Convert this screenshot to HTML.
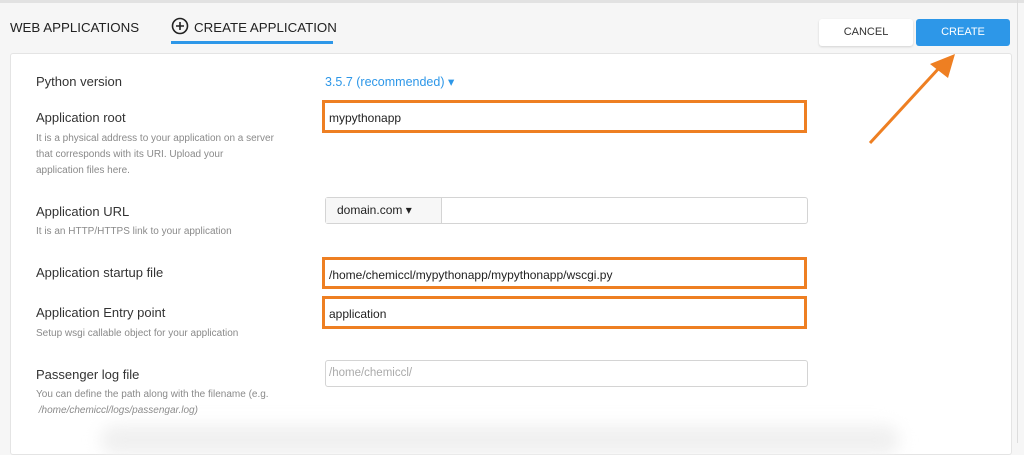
<!DOCTYPE html>
<html><head><style>
body{margin:0;width:1024px;height:443px;background:#f6f6f6;font-family:"Liberation Sans",sans-serif;position:relative;overflow:hidden}
.a{position:absolute;white-space:nowrap}
.lbl{font-size:13px;color:#333}
.desc{font-size:10px;color:#8a8a8a;line-height:16px}
.ob{position:absolute;left:322px;width:479px;border:3px solid #ee7f22;background:#fff;font-size:12px;color:#222;box-sizing:content-box}
.ob span{position:absolute;left:4px;top:8px}
.in{position:absolute;border:1px solid #d4d4d4;border-radius:3px;background:#fff}
</style></head><body>
<div class="a" style="left:0;top:0;width:1024px;height:3px;background:#e2e2e2"></div>
<div class="a" style="left:1017px;top:0;width:1px;height:443px;background:#ddd"></div>
<div class="a" style="left:10px;top:20px;font-size:13.3px;color:#222">WEB APPLICATIONS</div>
<div class="a" style="left:171px;top:17px;width:18px;height:18px"><svg width="18" height="18"><circle cx="9" cy="9" r="7.5" fill="none" stroke="#222" stroke-width="1.6"/><path d="M9 5v8M5 9h8" stroke="#222" stroke-width="1.6"/></svg></div>
<div class="a" style="left:194px;top:20px;font-size:13.3px;color:#222">CREATE APPLICATION</div>
<div class="a" style="left:171px;top:41px;width:162px;height:3px;background:#2d97e8"></div>
<div class="a" style="left:819px;top:19px;width:94px;height:27px;background:#fff;border-radius:3px;box-shadow:0 1px 2px rgba(0,0,0,.15);font-size:11px;color:#333;text-align:center;line-height:27px">CANCEL</div>
<div class="a" style="left:916px;top:19px;width:94px;height:27px;background:#2d97e8;border-radius:3px;font-size:11px;color:#fff;text-align:center;line-height:27px">CREATE</div>
<div class="a" style="left:10px;top:53px;width:1000px;height:400px;background:#fff;border:1px solid #e4e4e4;border-radius:3px"></div>
<svg class="a" style="left:0;top:0" width="1024" height="443"><path d="M870 143L940 67" stroke="#ee7f22" stroke-width="3"/><path d="M955 54L930 64L948 78Z" fill="#ee7f22"/></svg>

<div class="a lbl" style="left:36px;top:74px">Python version</div>
<div class="a" style="left:325px;top:74px;font-size:12.5px;color:#2d97e8">3.5.7 (recommended) ▾</div>

<div class="a lbl" style="left:36px;top:110px">Application root</div>
<div class="a desc" style="left:36px;top:131px">It is a physical address to your application on a server<br>that corresponds with its URI. Upload your<br>application files here.</div>
<div class="ob" style="top:100px;height:27px"><span>mypythonapp</span></div>

<div class="a lbl" style="left:36px;top:204px">Application URL</div>
<div class="a desc" style="left:36px;top:224px">It is an HTTP/HTTPS link to your application</div>
<div class="in" style="left:325px;top:197px;width:481px;height:25px"></div>
<div class="a" style="left:326px;top:198px;width:115px;height:25px;background:#f7f7f7;border-right:1px solid #d4d4d4;font-size:12px;color:#222;line-height:24px;text-indent:11px">domain.com ▾</div>

<div class="a lbl" style="left:36px;top:265px">Application startup file</div>
<div class="ob" style="top:257px;height:26px"><span>/home/chemiccl/mypythonapp/mypythonapp/wscgi.py</span></div>

<div class="a lbl" style="left:36px;top:305px">Application Entry point</div>
<div class="a desc" style="left:36px;top:326px">Setup wsgi callable object for your application</div>
<div class="ob" style="top:296px;height:27px"><span>application</span></div>

<div class="a lbl" style="left:36px;top:367px">Passenger log file</div>
<div class="a desc" style="left:36px;top:387px">You can define the path along with the filename (e.g.<br>&nbsp;<i>/home/chemiccl/logs/passengar.log)</i></div>
<div class="in" style="left:325px;top:360px;width:481px;height:25px"><span class="a" style="left:3px;top:6px;font-size:11.5px;color:#aaa">/home/chemiccl/</span></div>
<div class="a" style="left:100px;top:425px;width:800px;height:30px;background:#f0f0f0;filter:blur(8px);border-radius:20px"></div>
</body></html>
